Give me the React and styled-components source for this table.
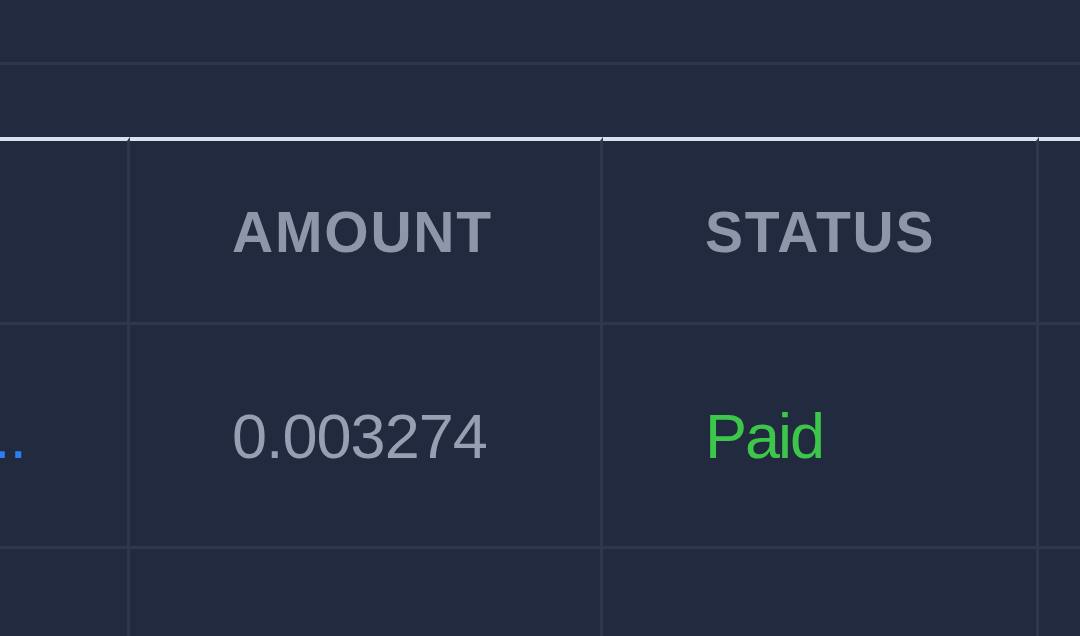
import React from "react";
import styled, { createGlobalStyle } from "styled-components";

const GlobalStyle = createGlobalStyle`
  html, body {
    margin: 0;
    padding: 0;
    background: #212a3e;
  }
  body {
    font-family: "Liberation Sans", Arial, Helvetica, sans-serif;
  }
`;

const Page = styled.div`
  width: 1080px;
  height: 636px;
  overflow: hidden;
  background: #212a3e;
  display: flex;
  flex-direction: column;
`;

const TopBar = styled.div`
  height: 62px;
  flex: none;
  border-bottom: 3px solid #2d354a;
`;

const Section = styled.section`
  padding-top: 72px;
  flex: 1;
  overflow: hidden;
`;

const Scroller = styled.div`
  width: 100%;
  overflow: hidden;
`;

const Table = styled.table`
  border-collapse: separate;
  border-spacing: 0;
  table-layout: fixed;
  width: 1669px;
  margin-left: -330px;
`;

const Col = styled.col`
  width: ${(p) => p.$w}px;
`;

const Th = styled.th`
  height: 181px;
  padding: 0 103px 0 102px;
  border-top: 4px solid #dbe1ec;
  border-right: 3px solid #2f374c;
  border-bottom: 3px solid #2f374c;
  text-align: left;
  vertical-align: middle;
  font-size: 57px;
  font-weight: 700;
  letter-spacing: 1.8px;
  color: #8e97a9;
  white-space: nowrap;
  overflow: hidden;
`;

const Td = styled.td`
  height: 221px;
  padding: 0 ${(p) => (p.$end ? "101px" : "103px")} 0 102px;
  border-right: 3px solid #2f374c;
  border-bottom: 3px solid #2f374c;
  text-align: ${(p) => (p.$end ? "right" : "left")};
  vertical-align: middle;
  font-size: 63px;
  letter-spacing: -1px;
  white-space: nowrap;
  overflow: hidden;
`;

const Hash = styled.span`
  color: #2c7ef1;
`;

const Amount = styled.span`
  color: #97a0b3;
`;

const Status = styled.span`
  color: ${(p) => (p.$state === "paid" ? "#3cc74a" : "#d9a93a")};
  letter-spacing: -2px;
`;

const rows = [
  { hash: "0x7a3f...", amount: "0.003274", status: "Paid" },
  { hash: "0x1d8e...", amount: "0.001458", status: "Paid" },
];

export default function App() {
  return (
    <>
      <GlobalStyle />
      <Page>
        <TopBar />
        <Section>
          <Scroller>
            <Table>
              <colgroup>
                <Col $w={460} />
                <Col $w={473} />
                <Col $w={436} />
                <Col $w={300} />
              </colgroup>
              <thead>
                <tr>
                  <Th>HASH</Th>
                  <Th>AMOUNT</Th>
                  <Th>STATUS</Th>
                  <Th>DATE</Th>
                </tr>
              </thead>
              <tbody>
                {rows.map((r) => (
                  <tr key={r.hash}>
                    <Td $end>
                      <Hash>{r.hash}</Hash>
                    </Td>
                    <Td>
                      <Amount>{r.amount}</Amount>
                    </Td>
                    <Td>
                      <Status $state="paid">{r.status}</Status>
                    </Td>
                    <Td />
                  </tr>
                ))}
              </tbody>
            </Table>
          </Scroller>
        </Section>
      </Page>
    </>
  );
}
